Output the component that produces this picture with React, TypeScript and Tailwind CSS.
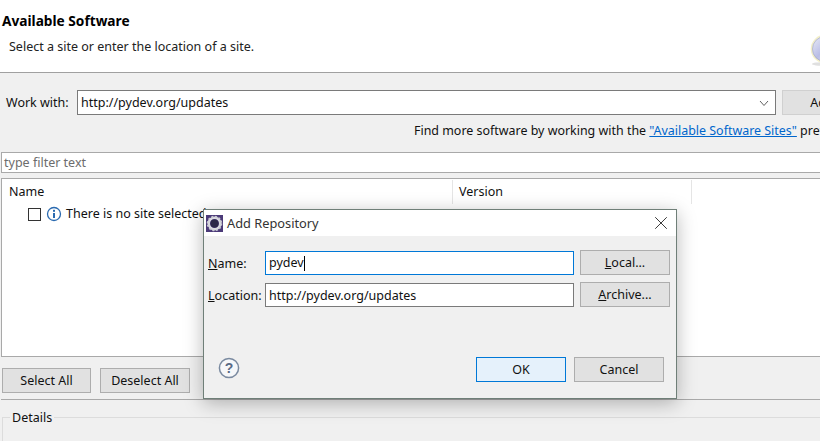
import { X } from "lucide-react";

function Btn({ className, children }: { className: string; children: React.ReactNode }) {
  return (
    <button
      type="button"
      className={`flex items-center justify-center shrink-0 h-[25px] border-2 border-[#adadad] bg-[#e1e1e1] text-[12.5px] text-[#111] ${className}`}
    >
      {children}
    </button>
  );
}

function Gear() {
  return (
    <svg width="17" height="17" viewBox="0 0 17 17" className="shrink-0">
      <rect width="17" height="17" fill="#4b3a78" />
      <circle cx="8.5" cy="8.5" r="5.8" fill="none" stroke="#d9d9df" strokeWidth="2.6" />
      <circle cx="8.5" cy="8.5" r="7" fill="none" stroke="#c9c9d2" strokeWidth="1.6" strokeDasharray="2 1.7" />
      <circle cx="8.5" cy="8.5" r="4" fill="#2c2748" />
    </svg>
  );
}

function Disc() {
  return (
    <svg width="32" height="32" viewBox="0 0 32 32" className="shrink-0">
      <defs>
        <linearGradient id="disc" x1="0" y1="0" x2="1" y2="1">
          <stop offset="0" stopColor="#eef0f8" />
          <stop offset="0.5" stopColor="#b9bde6" />
          <stop offset="1" stopColor="#e6e8f4" />
        </linearGradient>
      </defs>
      <ellipse cx="16" cy="29" rx="13" ry="2" fill="#e0e0e0" />
      <circle cx="16" cy="14" r="13.5" fill="url(#disc)" stroke="#f3efc8" strokeWidth="1.5" />
      <circle cx="16" cy="14" r="12.5" fill="none" stroke="#a8acc4" strokeWidth="0.7" />
    </svg>
  );
}

export default function App() {
  return (
    <div className="relative w-[820px] h-[441px] overflow-hidden bg-[#f0f0f0] text-[12.5px] text-[#111] font-['Noto_Sans',sans-serif] leading-[18px]">
      {/* header */}
      <div className="flex justify-between h-[73px] bg-white border-b border-[#a0a0a0]">
        <div className="flex flex-col">
          <div className="ml-[2px] mt-[12px] font-bold text-[13.7px] text-black">Available Software</div>
          <div className="ml-[9px] mt-[8px] text-[#222]">Select a site or enter the location of a site.</div>
        </div>
        <div className="mt-[35px] mr-[-21px]">
          <Disc />
        </div>
      </div>

      {/* work with */}
      <div className="flex items-center h-[25px] mt-[17px]">
        <span className="ml-[6px] w-[71px] shrink-0">Work with:</span>
        <div className="flex items-center justify-between w-[699px] h-[25px] shrink-0 bg-white border border-[#7a7a7a] pl-[3px] pr-[5px]">
          <span>http://pydev.org/updates</span>
          <svg width="12" height="12" viewBox="0 0 12 12">
            <path d="M2 4 L6 8.5 L10 4" fill="none" stroke="#606060" strokeWidth="1" />
          </svg>
        </div>
        <Btn className="ml-[6px] w-[90px] !border !border-[#d0d0d0]">Add...</Btn>
      </div>
      <div className="ml-[414px] mt-[6px] pt-[1px] h-[31px] w-[500px] whitespace-nowrap text-[12.45px]">
        Find more software by working with the{" "}
        <span className="text-[#0066cc] underline">"Available Software Sites"</span> preferences page.
      </div>

      {/* filter */}
      <div className="ml-[1px] mr-[-4px] h-[21px] bg-white border border-[#a9a9a9] pl-[2px] pt-[1px] text-[#6d6d6d]">
        type filter text
      </div>

      {/* tree */}
      <div className="ml-[1px] mr-[-4px] mt-[5px] h-[179px] bg-white border border-[#a9a9a9]">
        <div className="flex h-[24px] mt-[1px]">
          <div className="w-[451px] pl-[7px] pt-[3px] border-r border-[#e5e5e5]">Name</div>
          <div className="w-[239px] pl-[6px] pt-[3px] border-r border-[#e5e5e5]">Version</div>
        </div>
        <div className="flex items-center ml-[26px] h-[20px]">
          <span className="w-[13px] h-[13px] border border-[#333] bg-white" />
          <svg width="16" height="16" viewBox="0 0 16 16" className="ml-[5px]">
            <circle cx="8" cy="8" r="6.5" fill="#fff" stroke="#2a6ab0" strokeWidth="1.3" />
            <rect x="7" y="7" width="2" height="5" fill="#2a6ab0" />
            <rect x="7" y="3.8" width="2" height="2" fill="#2a6ab0" />
          </svg>
          <span className="ml-[4px]">There is no site selected.</span>
        </div>
      </div>

      {/* select buttons */}
      <div className="flex gap-[9px] ml-[2px] mt-[11px]">
        <Btn className="w-[89px] !border">Select All</Btn>
        <Btn className="w-[90px] !border">Deselect All</Btn>
      </div>
      <div className="mt-[6px] ml-[1px] border-t border-[#a9a9a9]" />

      {/* details */}
      <div className="relative ml-[2px] mt-[17px] h-[30px] border-t border-l border-[#dcdcdc]">
        <span className="absolute left-[7px] top-[-9px] bg-[#f0f0f0] px-[2px]">Details</span>
      </div>

      {/* dialog */}
      <div className="absolute left-[203px] top-[209px] w-[474px] h-[190px] flex flex-col bg-[#f0f0f0] border border-[#6f7f78] shadow-[0_4px_18px_rgba(0,0,0,0.28)]">
        <div className="flex items-center h-[26px] shrink-0 bg-white pl-[2px] pr-[4px]">
          <Gear />
          <span className="ml-[4px] pb-[1px] text-[12.8px] text-[#333]">Add Repository</span>
          <X className="ml-auto" size={22} strokeWidth={0.9} color="#111" />
        </div>
        <div className="flex items-center mt-[14px] h-[25px]">
          <span className="ml-[4px] w-[57px] shrink-0 pt-[2px]">
            <span className="underline">N</span>ame:
          </span>
          <div className="w-[309px] h-[24px] shrink-0 flex items-center bg-white border border-[#0078d7] pl-[3px] pt-[1px]">
            pydev<span className="w-px h-[15px] bg-black" />
          </div>
          <Btn className="ml-[6px] w-[90px] !border">
            <span className="underline">L</span>ocal...
          </Btn>
        </div>
        <div className="flex items-center mt-[7px] h-[25px]">
          <span className="ml-[4px] w-[57px] shrink-0 pt-[2px]">
            <span className="underline">L</span>ocation:
          </span>
          <div className="w-[309px] h-[24px] shrink-0 flex items-center bg-white border border-[#7a7a7a] pl-[3px] pt-[2px]">
            http://pydev.org/updates
          </div>
          <Btn className="ml-[6px] w-[90px] !border">
            <span className="underline">A</span>rchive...
          </Btn>
        </div>
        <div className="flex items-center mt-[50px] h-[25px]">
          <svg width="22" height="22" viewBox="0 0 22 22" className="ml-[14px] mt-[-3px]">
            <circle cx="11" cy="11" r="9.6" fill="#f6f7f9" stroke="#7a8aa0" strokeWidth="1.5" />
            <text x="11" y="16" textAnchor="middle" fontSize="14" fontWeight="700" fill="#5a6a85" fontFamily="Liberation Sans, sans-serif">?</text>
          </svg>
          <Btn className="ml-[236px] w-[90px] !border !border-[#0078d7] !bg-[#e5f1fb]">OK</Btn>
          <Btn className="ml-[8px] w-[90px] !border">Cancel</Btn>
        </div>
      </div>
    </div>
  );
}
